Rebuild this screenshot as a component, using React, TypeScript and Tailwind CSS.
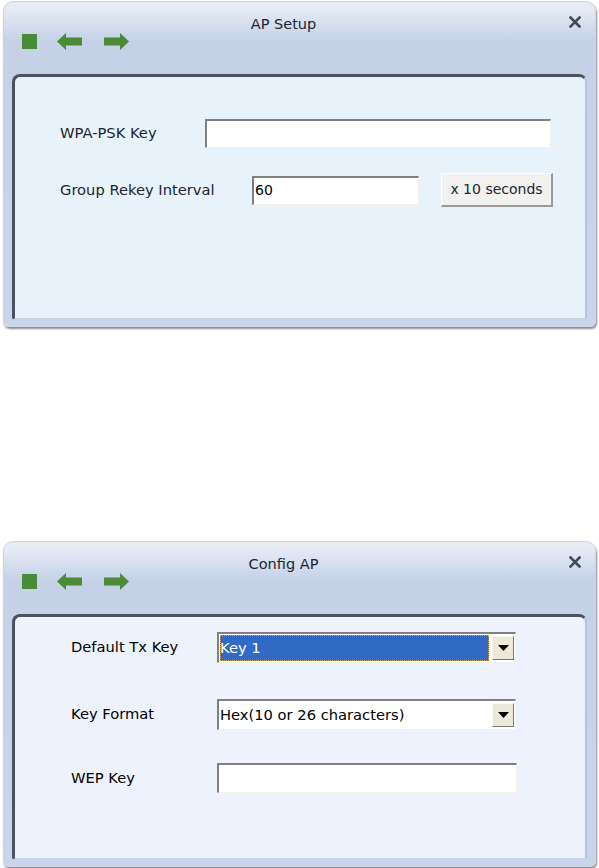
import React from "react";

const font = { fontFamily: '"DejaVu Sans", "Liberation Sans", sans-serif' } as const;

function ToolIcons() {
  return (
    <div className="flex items-center gap-[20px]">
      <div className="w-[15px] h-[15px] bg-[#4b8a37]" />
      <svg width="26" height="17" viewBox="0 0 26 17">
        <polygon points="0,8.5 9,0 9,4.5 25,4.5 25,12.5 9,12.5 9,17" fill="#4b8a37" />
      </svg>
      <svg width="26" height="17" viewBox="0 0 26 17">
        <polygon points="26,8.5 17,0 17,4.5 1,4.5 1,12.5 17,12.5 17,17" fill="#4b8a37" />
      </svg>
    </div>
  );
}

function CloseX() {
  return (
    <svg width="12" height="12" viewBox="0 0 12 12">
      <path d="M1.5 1.5 L10.5 10.5 M10.5 1.5 L1.5 10.5" stroke="#3d4a5c" strokeWidth="2.6" strokeLinecap="square" />
    </svg>
  );
}

function Window({
  title,
  panelBg,
  height,
  children,
}: {
  title: string;
  panelBg: string;
  height: string;
  children: React.ReactNode;
}) {
  return (
    <div
      className={`relative mx-[3px] w-[593px] ${height} rounded-t-[10px] rounded-b-[6px] border border-[#cdd5e2] bg-gradient-to-b from-[#e6ebf4] from-[2%] via-[#c4d1e7] via-[12%] to-[#c9d5ea] shadow-[1px_2px_2px_rgba(60,60,70,0.6)] flex flex-col`}
    >
      <div className="relative h-[72px] shrink-0">
        <div className="absolute left-0 right-[32px] top-[12px] text-center text-[14.5px] text-[#1c2430]" style={font}>
          {title}
        </div>
        <div className="absolute right-[14px] top-[14px]">
          <CloseX />
        </div>
        <div className="absolute left-[18px] top-[31px]">
          <ToolIcons />
        </div>
      </div>
      <div
        className={`mx-[8px] mb-[6px] flex-1 rounded-t-[8px] rounded-b-[3px] border-t-[3px] border-l-[3px] border-r-[2px] border-b-[2px] border-t-[#4a5260] border-l-[#4a5260] border-r-[#b7c3d8] border-b-[#c9d3e4] ${panelBg}`}
      >
        {children}
      </div>
    </div>
  );
}

function Sunken({ className, children }: { className: string; children?: React.ReactNode }) {
  return (
    <div
      className={`bg-white border-t-2 border-l-2 border-b border-r border-t-[#808080] border-l-[#808080] border-b-[#f4f1e8] border-r-[#f4f1e8] ${className}`}
    >
      {children}
    </div>
  );
}

function Select({ value, selected }: { value: string; selected?: boolean }) {
  return (
    <Sunken className="w-[299px] h-[31px] flex items-center p-[1px]">
      <div
        className={`flex-1 h-full flex items-center pl-0 text-[14.7px] ${
          selected ? "bg-[#316ac5] text-white outline outline-1 outline-dotted outline-[#c9a45a] -outline-offset-1" : "text-black"
        }`}
        style={font}
      >
        {value}
      </div>
      <div className="ml-[3px] w-[22px] h-[24px] bg-[#ece9d8] border-t border-l border-b border-r border-t-[#fbfaf5] border-l-[#fbfaf5] border-b-[#7b7a72] border-r-[#7b7a72] flex items-center justify-center">
        <svg width="11" height="6" viewBox="0 0 11 6">
          <polygon points="0,0 11,0 5.5,6" fill="#000" />
        </svg>
      </div>
    </Sunken>
  );
}

export default function App() {
  return (
    <div className="w-[599px] h-[868px] bg-white overflow-hidden flex flex-col pt-[1px]" style={font}>
      <Window title="AP Setup" panelBg="bg-[#e8f2fa]" height="h-[326px]">
        <div className="flex flex-col pl-[45px] pt-[41px] text-[#1d2530]">
          <div className="flex items-center h-[30px]">
            <span className="w-[145px] text-[14.7px]">WPA-PSK Key</span>
            <Sunken className="w-[346px] h-[29px]" />
          </div>
          <div className="flex items-center h-[34px] mt-[25px]">
            <span className="w-[192px] text-[14.7px]">Group Rekey Interval</span>
            <Sunken className="w-[167px] h-[29px] flex items-center pl-[1px] text-[14px] text-black">60</Sunken>
            <div className="ml-[22px] w-[112px] h-[34px] flex items-center justify-center bg-[#f1f1ef] border-t border-l border-b-2 border-r-2 border-t-[#ffffff] border-l-[#ffffff] border-b-[#9a9a9a] border-r-[#9a9a9a] text-[14px] text-[#1d2530]">
              x 10 seconds
            </div>
          </div>
        </div>
      </Window>
      <div className="h-[214px] shrink-0" />
      <Window title="Config AP" panelBg="bg-[#eef2fd]" height="h-[326px]">
        <div className="flex flex-col pl-[56px] pt-[15px] text-black">
          <div className="flex items-center h-[31px]">
            <span className="w-[146px] text-[14.7px]">Default Tx Key</span>
            <Select value="Key 1" selected />
          </div>
          <div className="flex items-center h-[31px] mt-[36px]">
            <span className="w-[146px] text-[14.7px]">Key Format</span>
            <Select value="Hex(10 or 26 characters)" />
          </div>
          <div className="flex items-center h-[30px] mt-[33px]">
            <span className="w-[146px] text-[14.7px]">WEP Key</span>
            <Sunken className="w-[300px] h-[30px]" />
          </div>
        </div>
      </Window>
    </div>
  );
}
